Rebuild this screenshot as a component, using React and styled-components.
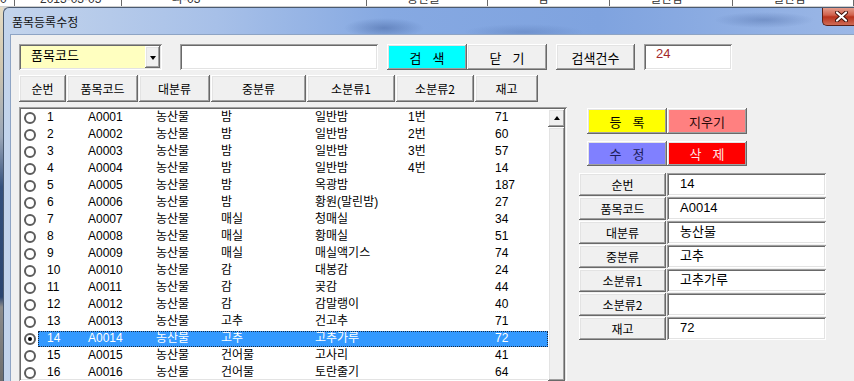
import React from 'react'
import styled, { createGlobalStyle, css } from 'styled-components'

const FONT = `"Liberation Sans Narrow", "Liberation Sans", "Noto Sans CJK KR", sans-serif`

const GlobalStyle = createGlobalStyle`
  html, body {
    margin: 0;
    padding: 0;
    background: #d6d6d6;
  }
  #root {
    width: 854px;
    height: 381px;
    overflow: hidden;
  }
  * { box-sizing: border-box; }
`

const items = [
  { no: 1, code: 'A0001', big: '농산물', mid: '밤', s1: '일반밤', s2: '1번', qty: 71 },
  { no: 2, code: 'A0002', big: '농산물', mid: '밤', s1: '일반밤', s2: '2번', qty: 60 },
  { no: 3, code: 'A0003', big: '농산물', mid: '밤', s1: '일반밤', s2: '3번', qty: 57 },
  { no: 4, code: 'A0004', big: '농산물', mid: '밤', s1: '일반밤', s2: '4번', qty: 14 },
  { no: 5, code: 'A0005', big: '농산물', mid: '밤', s1: '옥광밤', s2: '', qty: 187 },
  { no: 6, code: 'A0006', big: '농산물', mid: '밤', s1: '황원(말린밤)', s2: '', qty: 27 },
  { no: 7, code: 'A0007', big: '농산물', mid: '매실', s1: '청매실', s2: '', qty: 34 },
  { no: 8, code: 'A0008', big: '농산물', mid: '매실', s1: '황매실', s2: '', qty: 51 },
  { no: 9, code: 'A0009', big: '농산물', mid: '매실', s1: '매실액기스', s2: '', qty: 74 },
  { no: 10, code: 'A0010', big: '농산물', mid: '감', s1: '대봉감', s2: '', qty: 24 },
  { no: 11, code: 'A0011', big: '농산물', mid: '감', s1: '곶감', s2: '', qty: 44 },
  { no: 12, code: 'A0012', big: '농산물', mid: '감', s1: '감말랭이', s2: '', qty: 40 },
  { no: 13, code: 'A0013', big: '농산물', mid: '고추', s1: '건고추', s2: '', qty: 71 },
  { no: 14, code: 'A0014', big: '농산물', mid: '고추', s1: '고추가루', s2: '', qty: 72 },
  { no: 15, code: 'A0015', big: '농산물', mid: '건어물', s1: '고사리', s2: '', qty: 41 },
  { no: 16, code: 'A0016', big: '농산물', mid: '건어물', s1: '토란줄기', s2: '', qty: 64 },
]

const headers = [
  { label: '순번', w: 47 },
  { label: '품목코드', w: 71 },
  { label: '대분류', w: 71 },
  { label: '중분류', w: 95 },
  { label: '소분류1', w: 88 },
  { label: '소분류2', w: 78 },
  { label: '재고', w: 63 },
]

const colWidths = [41, 68, 65, 94, 93, 87, 50]

const raised = css`
  background: #f0f0f0;
  box-shadow:
    inset -1px -1px #696969,
    inset 1px 1px #ffffff,
    inset -2px -2px #a0a0a0,
    inset 2px 2px #e3e3e3;
`

const sunken = css`
  background: #ffffff;
  box-shadow:
    inset 1px 1px #a0a0a0,
    inset -1px -1px #ffffff,
    inset 2px 2px #696969,
    inset -2px -2px #e3e3e3;
`

const Desktop = styled.div`
  width: 854px;
  height: 381px;
  display: grid;
  grid-template-columns: 3px 1fr;
  grid-template-rows: 7px 1fr;
  font-family: ${FONT};
  color: #000;
`

const BackStrip = styled.div`
  grid-column: 1 / 3;
  background: #fff;
  display: flex;
  overflow: hidden;
  border-bottom: 1px solid #cfcfcf;
`

const BackCell = styled.div`
  width: ${p => p.$w}px;
  flex: none;
  border-right: 1px solid #6a6a6a;
  font-size: 12px;
  line-height: 12px;
  margin-top: -7px;
  padding-left: ${p => p.$pad}px;
  color: #333;
  white-space: nowrap;
  overflow: hidden;
`

const LeftEdge = styled.div`
  background: linear-gradient(
    to bottom,
    #e6dcc4 0,
    #cfc6b0 60px,
    #9aa6b8 130px,
    #34507c 180px,
    #2b4570 290px,
    #8c8c8c 300px,
    #6a6a6a 381px
  );
`

const Window = styled.div`
  display: flex;
  flex-direction: column;
  border-left: 1px solid #4a5a70;
  border-top: 1px solid #4a5a70;
  border-top-left-radius: 6px;
  background: linear-gradient(
    to right,
    #c3d4ec 0,
    #a7c0e8 25%,
    #86a9e2 45%,
    #7fa3df 70%,
    #9bb7e6 100%
  );
  overflow: hidden;
`

const TitleBar = styled.div`
  height: 26px;
  flex: none;
  display: flex;
  align-items: flex-start;
  padding-left: 8px;
  background:
    radial-gradient(ellipse 40px 10px at 380px 20px, rgba(60, 90, 150, 0.45), transparent),
    radial-gradient(ellipse 50px 8px at 760px 12px, rgba(60, 90, 150, 0.35), transparent),
    radial-gradient(ellipse 60px 8px at 520px 24px, rgba(60, 90, 150, 0.25), transparent);
`

const Title = styled.div`
  font-family: "Noto Sans CJK KR", sans-serif;
  font-size: 12px;
  line-height: 14px;
  margin-top: 7px;
  color: #111;
`

const CloseButton = styled.div`
  margin-left: auto;
  margin-top: -1px;
  width: 32px;
  height: 19px;
  border: 1px solid #5a2018;
  border-right: none;
  border-top: none;
  border-bottom-left-radius: 5px;
  background: linear-gradient(to bottom, #e8a595 0, #d0614c 45%, #b8321c 55%, #cf6b55 100%);
  display: flex;
  align-items: center;
  padding-left: 12px;
`

const Client = styled.div`
  flex: 1;
  margin-left: 6px;
  border-left: 1px solid #8ea4c4;
  border-top: 1px solid #8ea4c4;
  background: #f0f0f0;
  padding: 9px 0 0 8px;
  display: flex;
  flex-direction: column;
  min-height: 0;
`

const Toolbar = styled.div`
  display: flex;
  height: 26px;
  flex: none;
`

const Combo = styled.div`
  width: 143px;
  ${sunken};
  background: #ffffc0;
  display: flex;
  padding: 2px 2px 2px 12px;
  font-family: "Noto Sans CJK KR", sans-serif;
  font-size: 13px;
  line-height: 16px;
`

const ComboText = styled.div`
  flex: 1;
  padding-top: 1px;
`

const ComboArrow = styled.div`
  width: 15px;
  ${raised};
  display: flex;
  align-items: center;
  justify-content: center;
  &::after {
    content: '';
    border-left: 3.5px solid transparent;
    border-right: 3.5px solid transparent;
    border-top: 4px solid #000;
    margin-top: 2px;
  }
`

const TextBox = styled.div`
  width: ${p => p.$w}px;
  margin-left: ${p => p.$ml || 0}px;
  ${sunken};
  padding: 3px 12px;
  font-size: 13px;
  line-height: 14px;
  color: ${p => p.$color || '#000'};
`

const Button = styled.div`
  width: ${p => p.$w}px;
  margin-left: ${p => p.$ml || 0}px;
  ${raised};
  ${p => p.$bg && css`background: ${p.$bg};`}
  color: ${p => p.$color || '#000'};
  display: flex;
  align-items: center;
  justify-content: center;
  font-family: "Noto Sans CJK KR", sans-serif;
  font-size: ${p => p.$fs || 13}px;
  word-spacing: ${p => p.$ws || 0}px;
  white-space: pre;
  flex: none;
`

const Main = styled.div`
  flex: 1;
  display: flex;
  margin-top: 5px;
  min-height: 0;
`

const LeftCol = styled.div`
  width: 548px;
  display: flex;
  flex-direction: column;
`

const HeaderRow = styled.div`
  display: flex;
  gap: 1px;
  height: 27px;
  flex: none;
`

const ListBox = styled.div`
  flex: 1;
  margin-top: 5px;
  ${sunken};
  padding: 2px 2px 0 2px;
  display: flex;
  min-height: 0;
  overflow: hidden;
`

const Rows = styled.div`
  flex: 1;
  display: flex;
  flex-direction: column;
`

const Row = styled.div`
  display: flex;
  height: 17px;
  flex: none;
`

const RadioCell = styled.div`
  width: 17px;
  display: flex;
  align-items: center;
  justify-content: center;
  padding-left: 1px;
`

const Radio = styled.div`
  width: 12px;
  height: 12px;
  border-radius: 50%;
  border: 2px solid #5c5c5c;
  background: #fff;
  display: flex;
  align-items: center;
  justify-content: center;
  &::after {
    content: '';
    width: 4px;
    height: 4px;
    border-radius: 50%;
    background: ${p => (p.$checked ? '#000' : 'transparent')};
  }
`

const RowBody = styled.div`
  flex: 1;
  display: flex;
  padding-left: 9px;
  padding-top: 1px;
  margin-top: 1px;
  height: 16px;
  ${p =>
    p.$selected &&
    css`
      background: #3399ff;
      color: #fff;
      outline: 1px dotted #1a2a40;
      outline-offset: -1px;
    `}
`

const Cell = styled.div`
  width: ${p => p.$w}px;
  flex: none;
  font-size: 12px;
  line-height: 12px;
  white-space: nowrap;
`

const ScrollBar = styled.div`
  width: 17px;
  display: flex;
  flex-direction: column;
  background: #f0f0f0;
`

const ScrollUp = styled.div`
  height: 18px;
  ${raised};
  display: flex;
  align-items: center;
  justify-content: center;
  &::after {
    content: '';
    border-left: 3.5px solid transparent;
    border-right: 3.5px solid transparent;
    border-bottom: 4px solid #000;
  }
`

const ScrollThumb = styled.div`
  flex: 1;
  ${raised};
`

const RightPanel = styled.div`
  margin-left: 12px;
  padding-top: 33px;
  width: 247px;
  display: flex;
  flex-direction: column;
`

const ActionRow = styled.div`
  display: flex;
  height: ${p => p.$h}px;
  margin-left: 8px;
  margin-bottom: 7px;
`

const Form = styled.div`
  display: flex;
  flex-direction: column;
  gap: 1px;
`

const FieldRow = styled.div`
  display: flex;
  height: 23px;
`

const FieldLabel = styled.div`
  width: 87px;
  ${raised};
  display: flex;
  align-items: center;
  justify-content: center;
  font-family: "Noto Sans CJK KR", sans-serif;
  font-size: 12px;
`

const FieldValue = styled.div`
  width: 159px;
  margin-left: 1px;
  ${sunken};
  padding: 3px 13px;
  font-size: 13px;
  line-height: 15px;
`

const fields = [
  ['순번', '14'],
  ['품목코드', 'A0014'],
  ['대분류', '농산물'],
  ['중분류', '고추'],
  ['소분류1', '고추가루'],
  ['소분류2', ''],
  ['재고', '72'],
]

const App = () => {
  const selected = 14

  return (
    <>
      <GlobalStyle />
      <Desktop>
        <BackStrip>
          <BackCell $w={15} $pad={0}>0</BackCell>
          <BackCell $w={107} $pad={25}>2013-03-05</BackCell>
          <BackCell $w={245} $pad={50}>과-03</BackCell>
          <BackCell $w={121} $pad={40}>농산물</BackCell>
          <BackCell $w={122} $pad={50}>밤</BackCell>
          <BackCell $w={123} $pad={40}>일반밤</BackCell>
          <BackCell $w={121} $pad={40}>일반밤</BackCell>
        </BackStrip>
        <LeftEdge />
        <Window>
          <TitleBar>
            <Title>품목등록수정</Title>
            <CloseButton>
              <svg width="13" height="11" viewBox="0 0 13 11">
                <path d="M2 1.5 L11 9.5 M11 1.5 L2 9.5" stroke="#3a0e08" strokeWidth="4" strokeLinecap="round" />
                <path d="M2 1.5 L11 9.5 M11 1.5 L2 9.5" stroke="#ffffff" strokeWidth="2.2" strokeLinecap="round" />
              </svg>
            </CloseButton>
          </TitleBar>
          <Client>
            <Toolbar>
              <Combo>
                <ComboText>품목코드</ComboText>
                <ComboArrow />
              </Combo>
              <TextBox $w={198} $ml={18} />
              <Button $w={80} $ml={9} $bg="#00ffff" $ws={8}>검 색</Button>
              <Button $w={80} $ws={8}>닫 기</Button>
              <Button $w={79} $ml={9}>검색건수</Button>
              <TextBox $w={88} $ml={9} $color="#a3282a">24</TextBox>
            </Toolbar>
            <Main>
              <LeftCol>
                <HeaderRow>
                  {headers.map(h => (
                    <Button key={h.label} $w={h.w} $fs={12}>{h.label}</Button>
                  ))}
                </HeaderRow>
                <ListBox>
                  <Rows>
                    {items.map(it => {
                      const vals = [it.no, it.code, it.big, it.mid, it.s1, it.s2, it.qty]
                      return (
                        <Row key={it.no}>
                          <RadioCell>
                            <Radio $checked={it.no === selected} />
                          </RadioCell>
                          <RowBody $selected={it.no === selected}>
                            {vals.map((v, i) => (
                              <Cell key={i} $w={colWidths[i]}>{v}</Cell>
                            ))}
                          </RowBody>
                        </Row>
                      )
                    })}
                  </Rows>
                  <ScrollBar>
                    <ScrollUp />
                    <ScrollThumb />
                  </ScrollBar>
                </ListBox>
              </LeftCol>
              <RightPanel>
                <ActionRow $h={26}>
                  <Button $w={80} $bg="#ffff00" $ws={8}>등 록</Button>
                  <Button $w={80} $bg="#ff8080" $color="#2a0a0a">지우기</Button>
                </ActionRow>
                <ActionRow $h={25}>
                  <Button $w={80} $bg="#8080ff" $color="#1c1c5a" $ws={8}>수 정</Button>
                  <Button $w={80} $bg="#ff0000" $color="#ffe4e4" $ws={8}>삭 제</Button>
                </ActionRow>
                <Form>
                  {fields.map(([label, value]) => (
                    <FieldRow key={label}>
                      <FieldLabel>{label}</FieldLabel>
                      <FieldValue>{value}</FieldValue>
                    </FieldRow>
                  ))}
                </Form>
              </RightPanel>
            </Main>
          </Client>
        </Window>
      </Desktop>
    </>
  )
}

export default App
